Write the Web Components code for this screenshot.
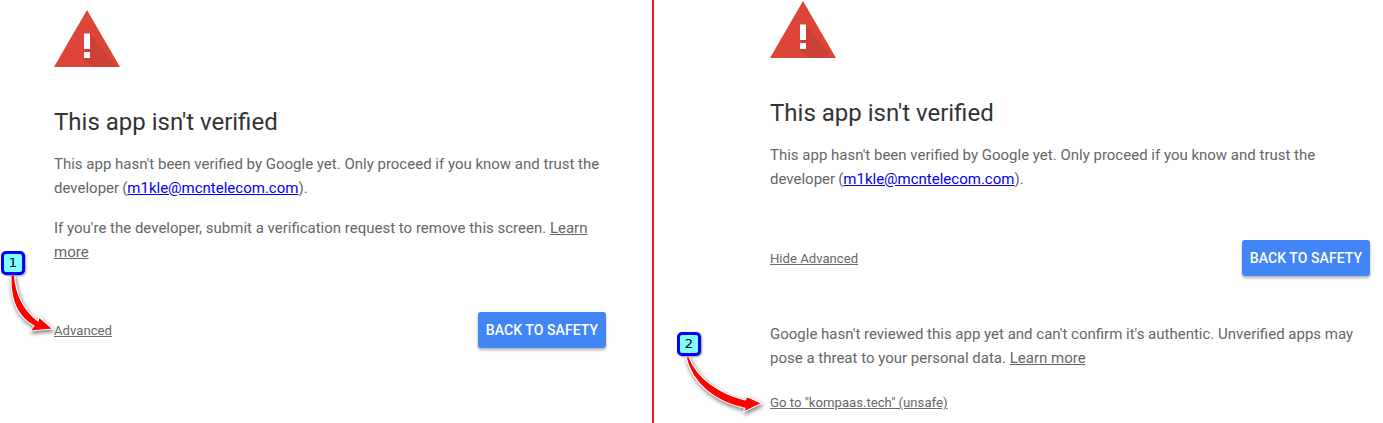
<!DOCTYPE html>
<html lang="en"><head><meta charset="utf-8"><title>This app isn't verified</title>
<style>
html,body{margin:0;padding:0;background:#fff}
body{width:1383px;height:423px;overflow:hidden;position:relative;font-family:Roboto,"Liberation Sans",sans-serif;display:flex}
</style></head><body>
<warn-panel style="--pad-top:10px;--w:652px;--pad-left:54px;--pad-right:46px;">
  <p-text>This app hasn't been verified by Google yet. Only proceed if you know and trust the developer&#8201;(<a href="#">m1kle@mcntelecom.com</a>).</p-text>
  <p-text style="--mt:16px">If you're the developer, submit a verification request to remove this screen. <u>Learn more</u></p-text>
  <action-row style="--mt:48px" label="Advanced"></action-row>
</warn-panel>
<warn-panel style="--pad-top:1px;--w:729px;--pad-left:116px;--pad-right:11px;--rule:2px solid #f5101a">
  <p-text>This app hasn't been verified by Google yet. Only proceed if you know and trust the developer&#8201;(<a href="#">m1kle@mcntelecom.com</a>).</p-text>
  <action-row style="--mt:49px" label="Hide Advanced"></action-row>
  <p-text style="--mt:46px">Google hasn't reviewed this app yet and can't confirm it's authentic. Unverified apps may pose a threat to your personal data. <u>Learn more</u></p-text>
  <small-link style="--mt:25px">Go to "kompaas.tech" (unsafe)</small-link>
</warn-panel>
<step-callout n="1" style="--x:1px;--y:251px">
  <svg slot="arrow" width="70" height="95" viewBox="0 0 70 95"><path d="M13.5 24C15 46 24 60 37 70L38 66L52 78L29 80L33 75C16 66 9 48 10 24Z" fill="#f00" stroke="#fff" stroke-width="1.2" stroke-linejoin="round"/></svg>
</step-callout>
<step-callout n="2" style="--x:677px;--y:332px">
  <svg slot="arrow" width="100" height="95" viewBox="0 0 100 95"><path d="M12 25C20 45 40 61 68 68L70.3 64.7L84.7 71.3L66.3 80.3L68 76.3C38 70 15 52 9 25Z" fill="#f00" stroke="#fff" stroke-width="1.2" stroke-linejoin="round"/></svg>
</step-callout>
<script>
class WarnPanel extends HTMLElement{constructor(){super();this.attachShadow({mode:'open'}).innerHTML=`<style>
:host{display:block;box-sizing:border-box;width:var(--w);height:423px;padding:var(--pad-top) var(--pad-right) 0 var(--pad-left);border-left:var(--rule,0 none);flex:none}
svg{display:block;width:66px;height:57px}
h1{font:400 24px/32px Roboto,"Liberation Sans",sans-serif;color:#333;margin:39px 0 14px}
</style>
<svg viewBox="0 0 66 57"><defs><clipPath id="c"><path d="M33 0L66 57H0Z"/></clipPath></defs><path d="M33 0L66 57H0Z" fill="#dd4539"/><path d="M36 23L62 57H38L30 48Z" fill="#000" opacity=".07" clip-path="url(#c)"/><rect x="30" y="23.5" width="6" height="15.5" fill="#fff"/><rect x="30" y="42" width="6" height="6" fill="#fff"/></svg>
<h1>This app isn't verified</h1><slot></slot>`}}
class PText extends HTMLElement{constructor(){super();this.attachShadow({mode:'open'}).innerHTML=`<style>
:host{display:block;font:400 15px/24px Roboto,"Liberation Sans",sans-serif;color:#666;margin-top:var(--mt,0)}
</style><slot></slot>`}}
class ActionRow extends HTMLElement{constructor(){super();const s=this.attachShadow({mode:'open'});s.innerHTML=`<style>
:host{display:flex;justify-content:space-between;align-items:center;margin-top:var(--mt,0)}
a{font:400 13.15px/16px Roboto,"Liberation Sans",sans-serif;color:#666;text-decoration:underline;padding-top:2px}
button{width:128px;height:36px;border:0;padding:0;border-radius:3px;background:#4285f4;color:#fff;font:500 14px/36px Roboto,"Liberation Sans",sans-serif;letter-spacing:.07px;box-shadow:0 2px 3px rgba(0,0,0,.3)}
</style><a>${this.getAttribute('label')}</a><button>BACK TO SAFETY</button>`}}
class SmallLink extends HTMLElement{constructor(){super();this.attachShadow({mode:'open'}).innerHTML=`<style>
:host{display:block;margin-top:var(--mt,0);font:400 13.15px/16px Roboto,"Liberation Sans",sans-serif;color:#666;text-decoration:underline}
</style><slot></slot>`}}
class StepCallout extends HTMLElement{constructor(){super();this.attachShadow({mode:'open'}).innerHTML=`<style>
:host{position:absolute;left:var(--x);top:var(--y);display:block}
.b{position:relative;z-index:1;box-sizing:border-box;width:24px;height:24px;border:3px solid #00f;border-radius:5px;background:#7fffff;color:#000;font:400 13px/18px "DejaVu Sans",sans-serif;text-align:center;box-shadow:1px 1px 2px rgba(0,0,0,.4)}
::slotted(svg){position:absolute;left:0;top:0;display:block;filter:drop-shadow(1px 2px 2px rgba(0,0,0,.55))}
</style><slot name="arrow"></slot><div class="b">${this.getAttribute('n')}</div>`}}
customElements.define('warn-panel',WarnPanel);
customElements.define('p-text',PText);
customElements.define('action-row',ActionRow);
customElements.define('small-link',SmallLink);
customElements.define('step-callout',StepCallout);
</script>
</body></html>
